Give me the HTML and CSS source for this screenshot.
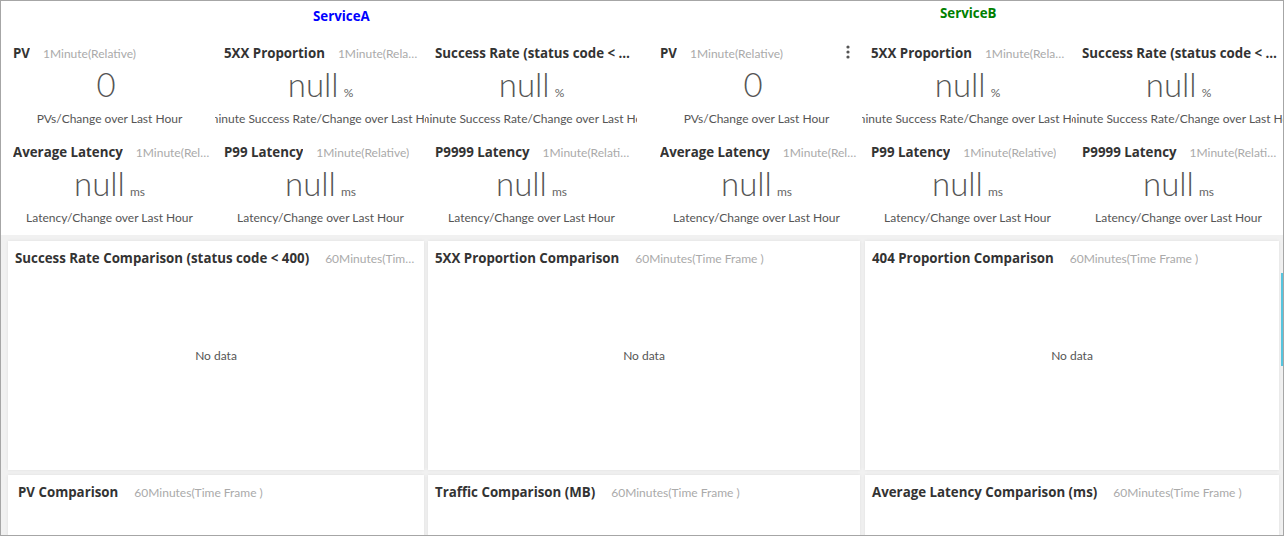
FILE: index.html
```html
<!DOCTYPE html>
<html>
<head>
<meta charset="utf-8">
<link rel="stylesheet" href="styles.css">
</head>
<body>
<div class="frame">
  <div class="top">
    <section class="group group-a">
      <div class="group-title title-a">ServiceA</div>
      <div class="tiles">
        <div class="tile">
          <div class="tile-head"><span class="tname">PV</span><span class="tmeta">1Minute(Relative)</span></div>
          <div class="tval solo"><span class="num">0</span></div>
          <div class="tsub"><span>PVs/Change over Last Hour</span></div>
        </div>
        <div class="tile">
          <div class="tile-head"><span class="tname">5XX Proportion</span><span class="tmeta">1Minute(Relative)</span></div>
          <div class="tval"><span class="num">null</span><span class="unit">%</span></div>
          <div class="tsub"><span>1 minute Success Rate/Change over Last Hour</span></div>
        </div>
        <div class="tile">
          <div class="tile-head"><span class="tname">Success Rate (status code &lt; 400)</span></div>
          <div class="tval"><span class="num">null</span><span class="unit">%</span></div>
          <div class="tsub"><span>1 minute Success Rate/Change over Last Hour</span></div>
        </div>
        <div class="tile">
          <div class="tile-head"><span class="tname">Average Latency</span><span class="tmeta">1Minute(Relative)</span></div>
          <div class="tval"><span class="num">null</span><span class="unit">ms</span></div>
          <div class="tsub"><span>Latency/Change over Last Hour</span></div>
        </div>
        <div class="tile">
          <div class="tile-head"><span class="tname">P99 Latency</span><span class="tmeta">1Minute(Relative)</span></div>
          <div class="tval"><span class="num">null</span><span class="unit">ms</span></div>
          <div class="tsub"><span>Latency/Change over Last Hour</span></div>
        </div>
        <div class="tile">
          <div class="tile-head"><span class="tname">P9999 Latency</span><span class="tmeta">1Minute(Relative)</span></div>
          <div class="tval"><span class="num">null</span><span class="unit">ms</span></div>
          <div class="tsub"><span>Latency/Change over Last Hour</span></div>
        </div>
      </div>
    </section>
    <section class="group group-b">
      <div class="group-title title-b">ServiceB</div>
      <div class="tiles">
        <div class="tile">
          <div class="tile-head"><span class="tname">PV</span><span class="tmeta">1Minute(Relative)</span></div>
          <div class="tval solo"><span class="num">0</span></div>
          <div class="tsub"><span>PVs/Change over Last Hour</span></div>
          <svg class="dots" width="4" height="14" viewBox="0 0 4 14"><circle cx="2" cy="2" r="1.6"/><circle cx="2" cy="7" r="1.6"/><circle cx="2" cy="12" r="1.6"/></svg>
        </div>
        <div class="tile">
          <div class="tile-head"><span class="tname">5XX Proportion</span><span class="tmeta">1Minute(Relative)</span></div>
          <div class="tval"><span class="num">null</span><span class="unit">%</span></div>
          <div class="tsub"><span>1 minute Success Rate/Change over Last Hour</span></div>
        </div>
        <div class="tile">
          <div class="tile-head"><span class="tname">Success Rate (status code &lt; 400)</span></div>
          <div class="tval"><span class="num">null</span><span class="unit">%</span></div>
          <div class="tsub"><span>1 minute Success Rate/Change over Last Hour</span></div>
        </div>
        <div class="tile">
          <div class="tile-head"><span class="tname">Average Latency</span><span class="tmeta">1Minute(Relative)</span></div>
          <div class="tval"><span class="num">null</span><span class="unit">ms</span></div>
          <div class="tsub"><span>Latency/Change over Last Hour</span></div>
        </div>
        <div class="tile">
          <div class="tile-head"><span class="tname">P99 Latency</span><span class="tmeta">1Minute(Relative)</span></div>
          <div class="tval"><span class="num">null</span><span class="unit">ms</span></div>
          <div class="tsub"><span>Latency/Change over Last Hour</span></div>
        </div>
        <div class="tile">
          <div class="tile-head"><span class="tname">P9999 Latency</span><span class="tmeta">1Minute(Relative)</span></div>
          <div class="tval"><span class="num">null</span><span class="unit">ms</span></div>
          <div class="tsub"><span>Latency/Change over Last Hour</span></div>
        </div>
      </div>
    </section>
  </div>
  <div class="cards">
    <div class="card">
      <div class="card-head"><span class="cname">Success Rate Comparison (status code &lt; 400)</span><span class="cmeta">60Minutes(Time Frame )</span></div>
      <div class="nodata">No data</div>
    </div>
    <div class="card">
      <div class="card-head"><span class="cname">5XX Proportion Comparison</span><span class="cmeta">60Minutes(Time Frame )</span></div>
      <div class="nodata">No data</div>
    </div>
    <div class="card">
      <div class="card-head"><span class="cname">404 Proportion Comparison</span><span class="cmeta">60Minutes(Time Frame )</span></div>
      <div class="nodata">No data</div>
    </div>
    <div class="card card-low card-pv">
      <div class="card-head"><span class="cname">PV Comparison</span><span class="cmeta">60Minutes(Time Frame )</span></div>
    </div>
    <div class="card card-low">
      <div class="card-head"><span class="cname">Traffic Comparison (MB)</span><span class="cmeta">60Minutes(Time Frame )</span></div>
    </div>
    <div class="card card-low">
      <div class="card-head"><span class="cname">Average Latency Comparison (ms)</span><span class="cmeta">60Minutes(Time Frame )</span></div>
    </div>
  </div>
  <div class="scroll-thumb"></div>
</div>
</body>
</html>
```

FILE: styles.css
```css
* { box-sizing: border-box; }
html, body { margin: 0; padding: 0; background: #fff; }
body {
  font-family: Lato, "Open Sans", "Liberation Sans", sans-serif;
  color: #333;
}
.frame {
  position: relative;
  width: 1284px;
  height: 536px;
  border: 1px solid #a6a6a6;
  overflow: hidden;
  background: #f1f1f1;
}
.top {
  display: flex;
  background: #fff;
  padding: 0 0 7px 3px;
  gap: 14px;
}
.group { flex: 0 0 633px; }
.group-title {
  font-family: "Open Sans", sans-serif;
  font-size: 13.3px;
  font-weight: 700;
  line-height: 18px;
  height: 42px;
}
.title-a { color: #0000ff; padding: 6px 0 0 309px; }
.title-b { color: #008000; padding: 3px 0 0 289px; }
.tiles {
  display: grid;
  grid-template-columns: repeat(3, 211px);
  row-gap: 13px;
}
.tile {
  position: relative;
  min-width: 0;
}
.tile-head {
  display: flex;
  align-items: baseline;
  height: 20px;
  line-height: 20px;
  padding: 0 5px 0 9px;
  white-space: nowrap;
  overflow: hidden;
}
.tname {
  font-family: "Open Sans", sans-serif;
  font-size: 13.3px;
  font-weight: 700;
  color: #333;
  flex: 0 0 auto;
  overflow: hidden;
  text-overflow: ellipsis;
  min-width: 0;
}
.tname:only-child { flex-shrink: 1; }
.tmeta {
  font-size: 12px;
  color: #aaa;
  margin-left: 13px;
  overflow: hidden;
  text-overflow: ellipsis;
  flex: 0 1 auto;
  min-width: 0;
}
.tval {
  display: flex;
  justify-content: center;
  align-items: baseline;
  height: 46px;
  line-height: 43px;
  color: #555;
}
.tval.solo { padding-right: 7px; }
.num { font-size: 33px; font-weight: 300; }
.unit { font-size: 12px; margin-left: 5px; color: #666; }
.tsub {
  display: flex;
  justify-content: center;
  height: 20px;
  line-height: 20px;
  font-size: 12px;
  color: #555;
  white-space: nowrap;
  overflow: hidden;
}
.tsub span { flex: 0 0 auto; }
.dots {
  position: absolute;
  right: 12px;
  top: 2px;
  fill: #555;
}
.cards {
  display: grid;
  grid-template-columns: 416px 432px 415px;
  grid-template-rows: 229px 200px;
  column-gap: 4px;
  row-gap: 5px;
  padding: 6px 0 0 7px;
}
.cards .card:nth-child(3n+3) { margin-left: 1px; }
.card {
  background: #fff;
  box-shadow: 0 0 3px rgba(0,0,0,0.08);
  display: flex;
  flex-direction: column;
  min-width: 0;
}
.card-head {
  display: flex;
  align-items: baseline;
  padding: 9px 7px 0 7px;
  line-height: 16px;
  white-space: nowrap;
  overflow: hidden;
}
.cname {
  font-family: "Open Sans", sans-serif;
  font-size: 13.3px;
  font-weight: 700;
  color: #333;
  flex: 0 0 auto;
}
.cmeta {
  font-size: 12px;
  color: #aaa;
  margin-left: 16px;
  overflow: hidden;
  text-overflow: ellipsis;
  min-width: 0;
}
.nodata {
  font-size: 12px;
  color: #555;
  text-align: center;
  margin-top: 81px;
}
.card-pv .card-head { padding-left: 10px; }
.scroll-thumb {
  position: absolute;
  right: -1px;
  top: 272px;
  width: 3px;
  height: 93px;
  background: #56c5df;
}
```
